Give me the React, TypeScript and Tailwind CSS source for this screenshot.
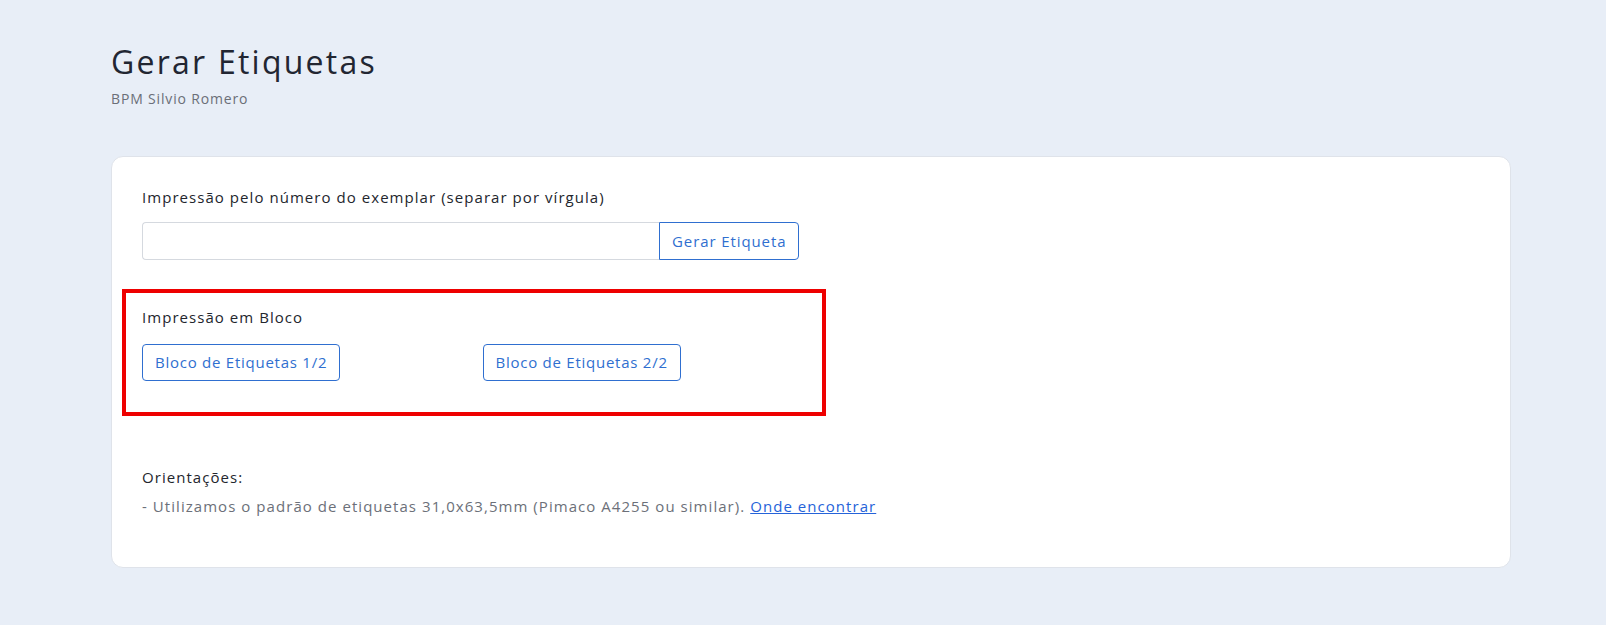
import React from "react";

const font = { fontFamily: "'Open Sans', 'Noto Sans', sans-serif" };

function OutlineButton({ children }: { children: React.ReactNode }) {
  return (
    <button
      type="button"
      className="h-[37px] rounded-[4px] border border-[#2f6fd0] bg-white px-[12px] text-[15px] leading-none tracking-[0.05em] text-[#2f6fd0]"
    >
      {children}
    </button>
  );
}

export default function App() {
  return (
    <div className="relative min-h-[625px] w-full bg-[#e8eef7]" style={font}>
      <div className="pl-[111px] pt-[40px]">
        <h1 className="text-[32px] leading-[44px] tracking-[0.07em] text-[#222632]">Gerar Etiquetas</h1>
        <p className="mt-[5px] text-[14px] leading-[20px] tracking-[0.06em] text-[#6b6f78]">BPM Silvio Romero</p>

        <div className="mt-[47px] w-[1400px] rounded-[12px] border border-[#dfe3ea] bg-white px-[30px] pt-[29px] pb-[50px]">
          <label className="block text-[15px] font-medium leading-[22px] tracking-[0.07em] text-[#23262d]">
            Impressão pelo número do exemplar (separar por vírgula)
          </label>
          <div className="mt-[14px] flex h-[38px]">
            <input
              type="text"
              className="h-full w-[517px] rounded-l-[4px] border border-r-0 border-[#d5d9df] bg-white px-[12px] outline-none"
            />
            <button
              type="button"
              className="h-full rounded-r-[4px] border border-[#2f6fd0] bg-white px-[12px] text-[15px] tracking-[0.06em] text-[#2f6fd0]"
            >
              Gerar Etiqueta
            </button>
          </div>

          <div className="mt-[46px] text-[15px] font-medium leading-[22px] tracking-[0.07em] text-[#23262d]">
            Impressão em Bloco
          </div>
          <div className="mt-[16px] grid grid-cols-4 gap-x-[24px]">
            <div>
              <OutlineButton>Bloco de Etiquetas 1/2</OutlineButton>
            </div>
            <div>
              <OutlineButton>Bloco de Etiquetas 2/2</OutlineButton>
            </div>
          </div>

          <div className="mt-[85px] text-[15px] font-medium leading-[22px] tracking-[0.07em] text-[#23262d]">
            Orientações:
          </div>
          <p className="mt-[7px] text-[15px] leading-[22px] tracking-[0.07em] text-[#6c7079]">
            - Utilizamos o padrão de etiquetas 31,0x63,5mm (Pimaco A4255 ou similar).{" "}
            <a href="#" className="text-[#2563d9] underline">
              Onde encontrar
            </a>
          </p>
        </div>
      </div>

      {/* highlight frame around the block-printing section */}
      <div className="pointer-events-none absolute left-[122px] top-[289px] h-[127px] w-[704px] border-[4px] border-[#ee0000]" />
    </div>
  );
}
